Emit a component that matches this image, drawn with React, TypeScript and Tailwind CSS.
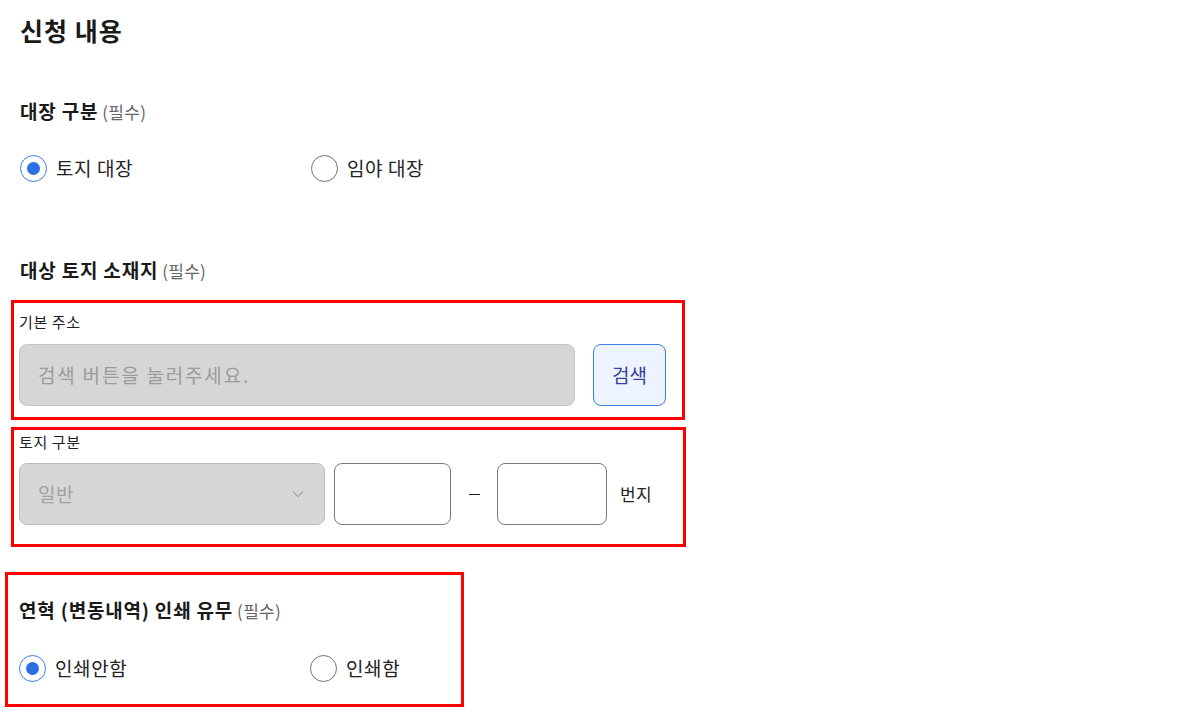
import React from "react";

function Radio({ checked, label }: { checked: boolean; label: string }) {
  return (
    <label className="flex items-center gap-[9px] h-[28px]">
      <span
        className={
          checked
            ? "w-[27px] h-[27px] rounded-full border-[1.5px] border-[#3a7be6] flex items-center justify-center bg-white"
            : "w-[27px] h-[27px] rounded-full border-[1.5px] border-[#6f6f6f] bg-white"
        }
      >
        {checked && <span className="w-[13px] h-[13px] rounded-full bg-[#2a6fe3]" />}
      </span>
      <span className="text-[19px] leading-[26px] tracking-[0.6px] text-[#222]">{label}</span>
    </label>
  );
}

function Heading({ text }: { text: string }) {
  return (
    <div className="flex items-baseline h-[26px]">
      <span className="text-[19px] leading-[26px] tracking-[0.8px] font-bold text-[#1a1a1a]">{text}</span>
      <span className="ml-[4px] text-[17px] leading-[26px] tracking-[0.3px] text-[#666]">(필수)</span>
    </div>
  );
}

export default function App() {
  return (
    <div className="bg-white w-[1178px] h-[712px] overflow-hidden pl-5 pt-[14px] font-['Noto_Sans_CJK_KR','Noto_Sans',sans-serif] text-[#222]">
      <h1 className="text-[25px] leading-[32px] h-[32px] tracking-[1px] font-bold text-[#1a1a1a]">신청 내용</h1>

      <div className="mt-[52px]">
        <Heading text="대장 구분" />
      </div>
      <div className="mt-[30px] flex">
        <div className="w-[291px]">
          <Radio checked label="토지 대장" />
        </div>
        <Radio checked={false} label="임야 대장" />
      </div>

      <div className="mt-[75px]">
        <Heading text="대상 토지 소재지" />
      </div>

      <div className="mt-[17px] ml-[-9px] w-[674px] border-[3px] border-[#ff0000] pl-[5px] pt-[9px] pb-[11px]">
        <div className="text-[15px] leading-[20px] tracking-[0.6px] text-[#222]">기본 주소</div>
        <div className="mt-[12px] flex gap-[18px]">
          <div className="w-[556px] h-[62px] rounded-[8px] bg-[#d6d6d6] border border-[#c6c6c6] flex items-center pl-[18px] text-[19px] tracking-[1.8px] text-[#9b9b9b]">
            검색 버튼을 눌러주세요.
          </div>
          <button className="w-[73px] h-[62px] rounded-[8px] bg-[#eef4ff] border border-[#3f7fe3] text-[19px] text-[#3340a0] flex items-center justify-center">
            검색
          </button>
        </div>
      </div>

      <div className="mt-[7px] ml-[-9px] w-[675px] border-[3px] border-[#ff0000] pl-[5px] pt-[2px] pb-[19px]">
        <div className="text-[15px] leading-[20px] tracking-[0.6px] text-[#222]">토지 구분</div>
        <div className="mt-[11px] flex items-center">
          <div className="w-[306px] h-[62px] rounded-[8px] bg-[#d6d6d6] border border-[#bdbdbd] flex items-center justify-between pl-[18px] pr-[20px] text-[19px] tracking-[0.6px] text-[#a3a3a3]">
            <span>일반</span>
            <svg width="12" height="8" viewBox="0 0 12 8" fill="none">
              <path d="M1 1.5L6 6.5L11 1.5" stroke="#a8a8a8" strokeWidth="1.4" />
            </svg>
          </div>
          <div className="ml-[9px] w-[117px] h-[62px] rounded-[8px] bg-white border border-[#7a7a7a]" />
          <div className="w-[46px] flex justify-center">
            <span className="block w-[11px] h-[1px] bg-[#222]" />
          </div>
          <div className="w-[110px] h-[62px] rounded-[8px] bg-white border border-[#7a7a7a]" />
          <div className="ml-[13px] text-[17px] tracking-[0.4px] text-[#222]">번지</div>
        </div>
      </div>

      <div className="mt-[25px] ml-[-15px] w-[459px] border-[3px] border-[#ff0000] pl-[11px] pt-[22px] pb-[22px]">
        <Heading text="연혁 (변동내역) 인쇄 유무" />
        <div className="mt-[31px] flex">
          <div className="w-[291px]">
            <Radio checked label="인쇄안함" />
          </div>
          <Radio checked={false} label="인쇄함" />
        </div>
      </div>
    </div>
  );
}
